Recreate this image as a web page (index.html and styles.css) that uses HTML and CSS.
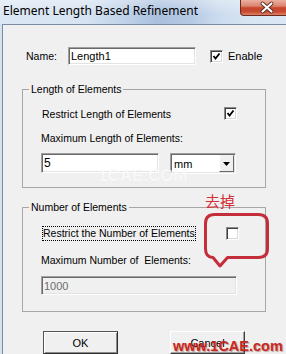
FILE: index.html
```html
<!DOCTYPE html>
<html>
<head>
<meta charset="utf-8">
<link rel="stylesheet" href="styles.css">
</head>
<body>
<div class="window">
  <div class="titlebar">
    <span class="title">Element Length Based Refinement</span>
    <div class="close">
      <svg width="45" height="15" viewBox="0 0 45 15">
        <path d="M21.5 3.5 L30.5 11.5 M30.5 3.5 L21.5 11.5" stroke="#5a2a20" stroke-width="4" stroke-linecap="round"/>
        <path d="M21.5 3.5 L30.5 11.5 M30.5 3.5 L21.5 11.5" stroke="#ffffff" stroke-width="2.2" stroke-linecap="round"/>
      </svg>
    </div>
  </div>
  <div class="client">
    <div class="name-row">
      <span class="name-label">Name:</span>
      <div class="field name-field">Length1</div>
      <span class="check enable-check">
        <svg width="9" height="9" viewBox="0 0 9 9"><path d="M1.5 4 L3.5 6.5 L7.5 1.5" fill="none" stroke="#000" stroke-width="1.8"/></svg>
      </span>
      <span class="enable">Enable</span>
    </div>

    <fieldset class="group g1">
      <legend>Length of Elements</legend>
      <div class="check-row r1">
        <span>Restrict Length of Elements</span>
        <span class="check">
          <svg width="9" height="9" viewBox="0 0 9 9"><path d="M1.5 4 L3.5 6.5 L7.5 1.5" fill="none" stroke="#000" stroke-width="1.8"/></svg>
        </span>
      </div>
      <div class="lbl l1">Maximum Length of Elements:</div>
      <div class="input-row i1">
        <div class="field len-field">5</div>
        <div class="combo">
          <span class="combo-text">mm</span>
          <span class="combo-btn">
            <svg width="7" height="4" viewBox="0 0 7 4"><path d="M0 0 H7 L3.5 4 Z" fill="#000"/></svg>
          </span>
        </div>
      </div>
    </fieldset>

    <fieldset class="group g2">
      <legend>Number of Elements</legend>
      <div class="check-row r2">
        <span class="focus">Restrict the Number of Elements</span>
        <span class="check"></span>
      </div>
      <div class="lbl l2">Maximum Number of&nbsp; Elements:</div>
      <div class="input-row i2">
        <div class="field num-field">1000</div>
      </div>
    </fieldset>

    <div class="buttons">
      <div class="btn ok">OK</div>
      <div class="btn cancel">Cancel</div>
    </div>
  </div>

  <div class="wm-mid">1CAE.COM</div>
  <div class="note">去掉</div>
  <svg class="bubble" width="74" height="64" viewBox="200 208 74 64">
    <path d="M214.5 214.5 H258.5 Q267.5 214.5 267.5 223.5 V248.5 Q267.5 257.5 258.5 257.5 H227.5 L220 266 L213 257.5 Q205.5 257.5 205.5 248.5 V223.5 Q205.5 214.5 214.5 214.5 Z" fill="none" stroke="#c42e3a" stroke-width="3" stroke-linejoin="round"/>
  </svg>
  <div class="wm">www.1CAE.com</div>
</div>
</body>
</html>
```

FILE: styles.css
```css
html, body {
  margin: 0;
  padding: 0;
}

.window {
  position: relative;
  width: 286px;
  height: 354px;
  overflow: hidden;
  background: #d3e1f1;
  font-family: "Liberation Sans", Arial, sans-serif;
  font-size: 10.5px;
  color: #000;
}

.titlebar {
  height: 24px;
  display: flex;
  align-items: flex-start;
  background:
    linear-gradient(180deg, rgba(255,255,255,0.35) 0%, rgba(255,255,255,0) 60%),
    linear-gradient(90deg, #dbe7f4 0%, #d6e3f2 30%, #c2d4ea 42%, #a9c0de 55%, #b4c8e3 66%, #cbdbee 76%, #d8e5f3 88%, #dbe7f4 100%);
}

.title {
  font-family: "Noto Sans", "DejaVu Sans", sans-serif;
  font-size: 12px;
  line-height: 21px;
  padding-left: 3px;
  color: #000;
}

.close {
  margin-left: auto;
  width: 45px;
  height: 15px;
  border: 1px solid #6e2a1e;
  border-top: none;
  border-right: none;
  border-bottom-left-radius: 4px;
  background: linear-gradient(180deg, #eab0a2 0%, #dc8670 40%, #c7462c 52%, #c84a30 78%, #de8468 100%);
}

.close svg {
  display: block;
}

.client {
  margin-left: 2px;
  height: 330px;
  border-left: 1px solid #7a8aa0;
  border-top: 1px solid #7a8aa0;
  background: #f0f0f0;
}

/* name row */
.name-row {
  display: flex;
  align-items: center;
  height: 18px;
  padding-top: 22px;
  padding-left: 23px;
}

.name-label {
  width: 42px;
}

.field {
  box-sizing: border-box;
  display: flex;
  align-items: center;
  padding-left: 2px;
  background: #fff;
  border: 1px solid;
  border-color: #a0a0a0 #ffffff #ffffff #a0a0a0;
  box-shadow: inset 1px 1px 0 #696969, inset -1px -1px 0 #e3e3e3;
  font-size: 11px;
}

.name-field {
  width: 128px;
  height: 18px;
}

.check {
  box-sizing: border-box;
  width: 13px;
  height: 13px;
  display: flex;
  align-items: center;
  justify-content: center;
  background: #fff;
  border: 1px solid;
  border-color: #8a8a8a #ffffff #ffffff #8a8a8a;
  box-shadow: inset 1px 1px 0 #404040, inset -1px -1px 0 #d8d8d8;
}

.check svg {
  display: block;
}

.enable-check {
  margin-left: 14px;
}

.enable {
  margin-left: 5px;
  font-size: 11px;
}

/* groups */
.group {
  box-sizing: border-box;
  width: 244px;
  margin: 0 0 0 19px;
  padding: 0;
  border: 1px solid #a6a6a6;
  min-width: 0;
}

.group legend {
  margin-left: 6px;
  padding: 0 2px;
  line-height: 13px;
}

.g1 {
  margin-top: 18px;
  padding-bottom: 13px;
}

.g2 {
  margin-top: 13px;
  padding-bottom: 16px;
}

.check-row {
  display: grid;
  align-items: center;
  padding-left: 19px;
}

.r1 {
  grid-template-columns: 182px 13px;
  height: 13px;
  margin-top: 11px;
}

.r2 {
  grid-template-columns: 184px 13px;
  margin-top: 12px;
}

.focus {
  justify-self: start;
  border: 1px dotted #000;
  line-height: 13px;
}

.lbl {
  padding-left: 18px;
  line-height: 13px;
  white-space: nowrap;
}

.l1 {
  margin-top: 12px;
}

.l2 {
  margin-top: 13px;
}

.input-row {
  display: flex;
  padding-left: 18px;
}

.i1 {
  margin-top: 8px;
}

.i2 {
  margin-top: 9px;
}

.len-field {
  width: 118px;
  height: 20px;
  font-size: 12px;
}

.combo {
  box-sizing: border-box;
  width: 66px;
  height: 21px;
  margin-left: 11px;
  display: flex;
  align-items: center;
  background: #fff;
  border: 1px solid;
  border-color: #a0a0a0 #ffffff #ffffff #a0a0a0;
  box-shadow: inset 1px 1px 0 #696969, inset -1px -1px 0 #e3e3e3;
}

.combo-text {
  padding-left: 3px;
  font-size: 11px;
  flex: 1;
}

.combo-btn {
  box-sizing: border-box;
  width: 15px;
  height: 17px;
  margin-right: 1px;
  display: flex;
  align-items: center;
  justify-content: center;
  background: #f0f0f0;
  border: 1px solid;
  border-color: #f0f0f0 #696969 #696969 #ffffff;
}

.combo-btn svg {
  display: block;
}

.num-field {
  width: 196px;
  height: 19px;
  background: #f0f0f0;
  color: #6d6d6d;
}

/* buttons */
.buttons {
  display: flex;
  gap: 52px;
  margin-top: 19px;
  padding-left: 40px;
}

.btn {
  box-sizing: border-box;
  width: 75px;
  height: 23px;
  display: flex;
  align-items: center;
  justify-content: center;
  background: #f0f0f0;
  border: 1px solid;
  border-color: #ffffff #404040 #404040 #ffffff;
  box-shadow: inset -1px -1px 0 #a0a0a0;
  font-size: 11px;
}

.ok {
  border-color: #555 #303030 #303030 #555;
  box-shadow: inset 1px 1px 0 #ffffff, inset -1px -1px 0 #8a8a8a;
}

/* annotation overlays */
.note {
  position: absolute;
  left: 205px;
  top: 192px;
  color: #d33039;
  font-family: "Noto Sans CJK SC", sans-serif;
  font-size: 15px;
  line-height: 17px;
}

.bubble {
  position: absolute;
  left: 200px;
  top: 208px;
}

.wm {
  position: absolute;
  left: 173px;
  top: 338px;
  font-family: "Liberation Sans", Arial, sans-serif;
  font-weight: bold;
  font-size: 14.5px;
  line-height: 16px;
  color: #c8281f;
  text-shadow: 1px 1px 1px rgba(90, 0, 0, 0.35);
}

.wm-mid {
  position: absolute;
  left: 98px;
  top: 168px;
  font-family: "Liberation Sans", Arial, sans-serif;
  font-weight: bold;
  font-size: 17px;
  line-height: 16px;
  color: rgba(255, 255, 255, 0.75);
  text-shadow: 0 0 1px rgba(0, 0, 0, 0.06);
}
```
